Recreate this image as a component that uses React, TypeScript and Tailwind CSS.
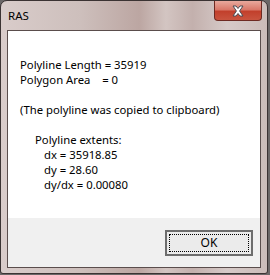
import React from "react";

const font = { fontFamily: '"Segoe UI", "Noto Sans", sans-serif' };

// White X on the Aero close button
const CloseGlyph = () => (
  <svg width="14" height="12" viewBox="0 0 14 12">
    <path
      d="M2 1 L5 1 L7 3.5 L9 1 L12 1 L8.6 6 L12 11 L9 11 L7 8.5 L5 11 L2 11 L5.4 6 Z"
      fill="#ffffff"
      stroke="#4a4a52"
      strokeWidth="1"
      strokeLinejoin="round"
    />
  </svg>
);

export default function App() {
  return (
    <div className="w-[270px] h-[275px] bg-[#6b6767] overflow-hidden" style={font}>
      <div className="w-[268px] h-[274px] rounded-t-[7px] rounded-b-[3px] border border-[#3b3333] bg-[linear-gradient(90deg,#d9ccca_0%,#cdbfbc_30%,#bca6a2_52%,#d3c5c2_62%,#c3b0ad_72%,#d6cac8_85%,#cbbcb9_100%)] flex flex-col">
        {/* title bar */}
        <div className="h-[29px] flex items-start shrink-0">
          <div className="pl-[7px] pt-[7px] text-[11.5px] leading-[15px] text-black">RAS</div>
          <div className="ml-auto mr-[5px] w-[48px] h-[20px] rounded-b-[4px] border border-t-0 border-[#6e2a22] bg-[linear-gradient(180deg,#e8a99d_0%,#d9796a_45%,#c2402c_55%,#c9543f_100%)] flex items-center justify-center">
            <CloseGlyph />
          </div>
        </div>

        {/* client area */}
        <div className="mx-[6px] h-[238px] border border-[#5a4d4c] flex flex-col">
          <div className="h-[187px] bg-white pl-[12px] pt-[26px] text-[11.3px] leading-[15px] text-black whitespace-pre">
            <div>Polyline Length = 35919</div>
            <div>Polygon Area    = 0</div>
            <div className="h-[15px]" />
            <div>(The polyline was copied to clipboard)</div>
            <div className="h-[15px]" />
            <div className="pl-[15px]">Polyline extents:</div>
            <div className="pl-[24px]">dx = 35918.85</div>
            <div className="pl-[24px]">dy = 28.60</div>
            <div className="pl-[24px]">dy/dx = 0.00080</div>
          </div>
          <div className="flex-1 bg-[#f0f0f0] flex justify-end items-start pt-[12px] pr-[7px]">
            <button className="w-[88px] h-[26px] border-2 border-[#6d6d6d] bg-[#ebebeb] p-[2px] flex">
              <span className="flex-1 border border-dotted border-black flex items-center justify-center text-[12px] text-black">
                OK
              </span>
            </button>
          </div>
        </div>
      </div>
    </div>
  );
}
